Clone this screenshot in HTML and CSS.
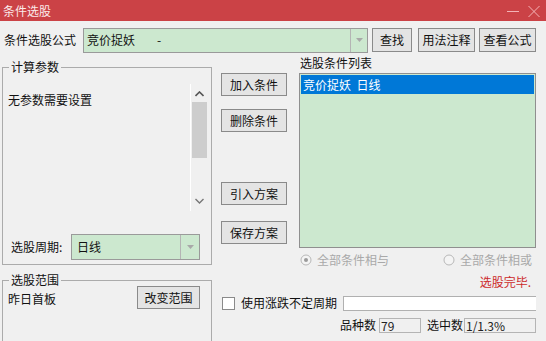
FILE: index.html
```html
<!DOCTYPE html>
<html lang="zh">
<head>
<meta charset="utf-8">
<title>条件选股</title>
<link rel="stylesheet" href="styles.css">
</head>
<body>
<div class="window">
  <div class="titlebar">
    <span class="title">条件选股</span>
    <span class="controls">
      <svg class="min-icon" width="12" height="14" viewBox="0 0 12 14"><line x1="0" y1="7.5" x2="12" y2="7.5" stroke="#f3b3b6" stroke-width="1"/></svg>
      <svg class="close-icon" width="12" height="14" viewBox="0 0 12 14"><path d="M0.5 2 L11.5 13 M11.5 2 L0.5 13" stroke="#f3b3b6" stroke-width="1" fill="none"/></svg>
    </span>
  </div>

  <div class="toprow">
    <span class="toplabel">条件选股公式</span>
    <div class="combo formula-combo">
      <span class="combo-text">竞价捉妖<span class="dash">-</span></span>
      <span class="combo-arrow"><svg width="7" height="4" viewBox="0 0 7 4"><path d="M0 0 H7 L3.5 4 Z" fill="#a8a8a8"/></svg></span>
    </div>
    <button class="btn btn-find">查找</button>
    <button class="btn btn-usage">用法注释</button>
    <button class="btn btn-view">查看公式</button>
  </div>

  <div class="main">
    <div class="leftcol">
      <div class="group params">
        <div class="legend">计算参数</div>
        <div class="param-area">
          <div class="param-text">无参数需要设置</div>
          <div class="scrollbar">
            <span class="sb-arrow"><svg width="9" height="6" viewBox="0 0 9 6"><path d="M0.5 5 L4.5 1 L8.5 5" stroke="#555" stroke-width="1.6" fill="none"/></svg></span>
            <span class="sb-thumb"></span>
            <span class="sb-space"></span>
            <span class="sb-arrow"><svg width="9" height="6" viewBox="0 0 9 6"><path d="M0.5 1 L4.5 5 L8.5 1" stroke="#777" stroke-width="1.4" fill="none"/></svg></span>
          </div>
        </div>
        <div class="period-row">
          <span class="period-label">选股周期:</span>
          <div class="combo period-combo">
            <span class="combo-text">日线</span>
            <span class="combo-arrow"><svg width="7" height="4" viewBox="0 0 7 4"><path d="M0 0 H7 L3.5 4 Z" fill="#a8a8a8"/></svg></span>
          </div>
        </div>
      </div>

      <div class="group range">
        <div class="legend">选股范围</div>
        <div class="range-row">
          <span class="range-text">昨日首板</span>
          <button class="btn btn-range">改变范围</button>
        </div>
      </div>
    </div>

    <div class="rightcol">
      <div class="upper">
        <div class="btncol">
          <button class="btn side-btn b1">加入条件</button>
          <button class="btn side-btn b2">删除条件</button>
          <button class="btn side-btn b3">引入方案</button>
          <button class="btn side-btn b4">保存方案</button>
        </div>
        <div class="listcol">
          <div class="list-label">选股条件列表</div>
          <div class="listbox">
            <div class="list-item selected">竞价捉妖&nbsp;&nbsp;日线</div>
          </div>
        </div>
      </div>

      <div class="radios">
        <span class="radio r-and">
          <svg width="12" height="12" viewBox="0 0 12 12"><circle cx="6" cy="6" r="5" fill="#f4f4f4" stroke="#b8b8b8"/><circle cx="6" cy="6" r="2" fill="#9a9a9a"/></svg>
          <span class="radio-text">全部条件相与</span>
        </span>
        <span class="radio r-or">
          <svg width="12" height="12" viewBox="0 0 12 12"><circle cx="6" cy="6" r="5" fill="#f4f4f4" stroke="#b8b8b8"/></svg>
          <span class="radio-text">全部条件相或</span>
        </span>
      </div>

      <div class="status">选股完毕.</div>

      <div class="check-row">
        <span class="checkbox"></span>
        <span class="check-text">使用涨跌不定周期</span>
        <span class="text-input"></span>
      </div>

      <div class="count-row">
        <span class="count-label">品种数</span>
        <span class="count-box box-total">79</span>
        <span class="count-label label-selected">选中数</span>
        <span class="count-box box-selected">1/1.3%</span>
      </div>
    </div>
  </div>
</div>
</body>
</html>
```

FILE: styles.css
```css
* {
  box-sizing: border-box;
}

html, body {
  margin: 0;
  padding: 0;
}

body {
  width: 546px;
  height: 341px;
  overflow: hidden;
  background: #f0f0f0;
  font-family: "Noto Sans CJK SC", "Noto Sans", sans-serif;
  font-size: 12px;
  line-height: 16px;
  color: #111;
}

.window {
  width: 546px;
  height: 341px;
  overflow: hidden;
}

/* Title bar */
.titlebar {
  height: 21px;
  background: #cb4246;
  display: flex;
  align-items: center;
  justify-content: space-between;
  padding-left: 3px;
  color: #fff;
}

.title {
  font-size: 12px;
  line-height: 21px;
  color: #fbeaea;
}

.controls {
  display: flex;
  align-items: center;
  gap: 9px;
  padding-right: 6px;
}

.controls svg {
  display: block;
}

/* Top row */
.toprow {
  display: flex;
  align-items: center;
  height: 24px;
  margin-top: 7px;
  padding-left: 4px;
}

.toplabel {
  width: 72px;
  white-space: nowrap;
}

.combo {
  display: flex;
  align-items: stretch;
  background: #cce8cf;
  border: 1px solid #9a9a9a;
}

.combo-text {
  flex: 1;
  display: flex;
  align-items: center;
  white-space: nowrap;
}

.combo-arrow {
  display: flex;
  align-items: center;
  justify-content: center;
  border-left: 1px solid #b4b4b4;
}

.combo-arrow svg {
  display: block;
}

.formula-combo {
  width: 285px;
  height: 25px;
  margin-left: 7px;
}

.formula-combo .combo-text {
  padding-left: 3px;
}

.formula-combo .combo-arrow {
  width: 17px;
}

.dash {
  margin-left: 22px;
}

.btn {
  font-family: "Noto Sans CJK SC", "Noto Sans", sans-serif;
  font-size: 12px;
  line-height: 16px;
  color: #111;
  background: #e4e4e4;
  border: 1px solid #8a8a8a;
  padding: 0;
  margin: 0;
  display: flex;
  align-items: center;
  justify-content: center;
  white-space: nowrap;
}

.toprow .btn {
  height: 24px;
}

.btn-find {
  width: 40px;
  margin-left: 4px;
}

.btn-usage {
  width: 57px;
  margin-left: 6px;
}

.btn-view {
  width: 57px;
  margin-left: 4px;
}

/* Main */
.main {
  display: flex;
  align-items: flex-start;
}

.leftcol {
  width: 210px;
  margin-left: 2px;
  display: flex;
  flex-direction: column;
}

.group {
  border: 1px solid #ababab;
}

.legend {
  width: fit-content;
  margin: -9px 0 0 6px;
  padding: 0 2px;
  background: #f0f0f0;
  line-height: 16px;
  color: #111;
}

.params {
  margin-top: 15px;
  height: 198px;
}

.param-area {
  display: flex;
  height: 127px;
  margin-top: 9px;
}

.param-text {
  flex: 1;
  padding-left: 5px;
  padding-top: 8px;
}

.scrollbar {
  width: 17px;
  margin-right: 4px;
  border-left: 1px solid #ffffff;
  display: flex;
  flex-direction: column;
  align-items: center;
  padding-top: 6px;
  padding-bottom: 6px;
}

.sb-arrow {
  height: 8px;
  display: flex;
  align-items: center;
  justify-content: center;
}

.sb-arrow svg {
  display: block;
}

.sb-thumb {
  width: 15px;
  height: 56px;
  margin-top: 4px;
  background: #cdcdcd;
}

.sb-space {
  flex: 1;
}

.period-row {
  display: flex;
  align-items: center;
  margin-top: 23px;
  padding-left: 8px;
}

.period-label {
  width: 60px;
  white-space: nowrap;
}

.period-combo {
  width: 129px;
  height: 26px;
}

.period-combo .combo-text {
  padding-left: 5px;
}

.period-combo .combo-arrow {
  width: 19px;
}

.range {
  margin-top: 15px;
  height: 61px;
  border-bottom: none;
}

.range-row {
  display: flex;
  align-items: flex-start;
  padding-left: 5px;
}

.range-text {
  margin-top: 3px;
  width: 129px;
}

.btn-range {
  width: 63px;
  height: 23px;
  margin-top: -2px;
}

/* Right column */
.rightcol {
  width: 315px;
  margin-left: 9px;
  display: flex;
  flex-direction: column;
}

.upper {
  display: flex;
  align-items: flex-start;
}

.btncol {
  width: 66px;
  display: flex;
  flex-direction: column;
  padding-top: 21px;
}

.side-btn {
  width: 66px;
  height: 23px;
}

.b2 {
  margin-top: 13px;
}

.b3 {
  margin-top: 50px;
}

.b4 {
  margin-top: 16px;
}

.listcol {
  width: 237px;
  margin-left: 12px;
  display: flex;
  flex-direction: column;
}

.list-label {
  margin-top: 3px;
  height: 16px;
  padding-left: 1px;
}

.listbox {
  margin-top: 2px;
  height: 175px;
  background: #cce8cf;
  border: 1px solid #8f8f8f;
  padding: 1px;
}

.list-item {
  height: 19px;
  line-height: 19px;
  padding-left: 2px;
  white-space: nowrap;
}

.list-item.selected {
  background: #0078d7;
  color: #fff;
}

.radios {
  display: flex;
  align-items: center;
  height: 16px;
  margin-top: 4px;
  padding-left: 79px;
  color: #a9a9a9;
}

.radio {
  display: flex;
  align-items: center;
}

.radio svg {
  display: block;
}

.radio-text {
  margin-left: 5px;
}

.r-or {
  margin-left: 54px;
}

.status {
  margin-top: 6px;
  height: 16px;
  text-align: right;
  padding-right: 5px;
  color: #cc2a2a;
}

.check-row {
  display: flex;
  align-items: center;
  margin-top: 5px;
  height: 16px;
}

.checkbox {
  width: 13px;
  height: 13px;
  margin-left: 1px;
  background: #fff;
  border: 1px solid #8a8a8a;
}

.check-text {
  margin-left: 6px;
  white-space: nowrap;
}

.text-input {
  flex: 1;
  height: 15px;
  margin-left: 6px;
  background: #fff;
  border: 1px solid #b0b0b0;
  border-right: none;
}

.count-row {
  display: flex;
  align-items: center;
  justify-content: flex-end;
  margin-top: 6px;
  height: 16px;
}

.count-label {
  white-space: nowrap;
}

.count-box {
  height: 15px;
  line-height: 13px;
  border: 1px solid #b4b4b4;
  background: #f0f0f0;
  padding-left: 1px;
  color: #222;
  white-space: nowrap;
}

.box-total {
  width: 42px;
  margin-left: 3px;
}

.label-selected {
  margin-left: 6px;
}

.box-selected {
  width: 72px;
  margin-left: 1px;
}
```
